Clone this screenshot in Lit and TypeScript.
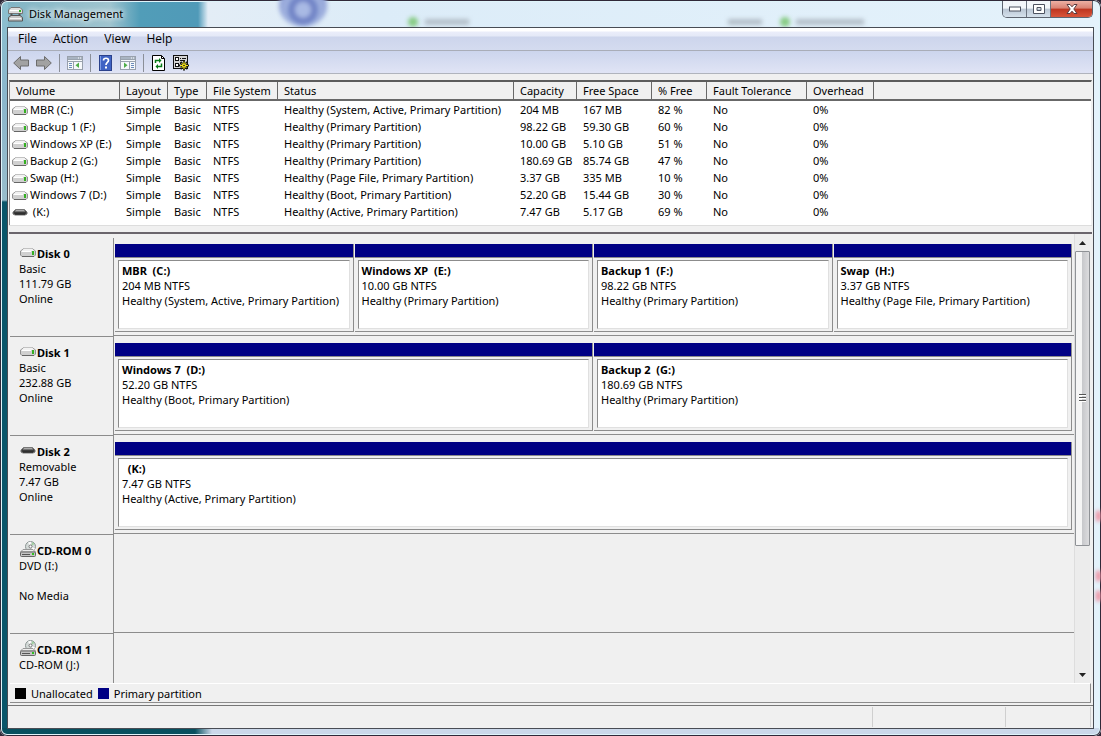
import { LitElement, html, css, svg, nothing } from "lit";
import { customElement, property } from "lit/decorators.js";

type DriveKind = "disk" | "removable" | "cd";

interface Volume {
  name: string;
  kind: DriveKind;
  status: string;
  capacity: string;
  free: string;
  percent: string;
}

interface Partition {
  name: string;
  size: string;
  status: string;
}

interface Disk {
  name: string;
  kind: DriveKind;
  lines: string[];
  partitions: Partition[];
}

const volumes: Volume[] = [
  { name: "MBR (C:)", kind: "disk", status: "Healthy (System, Active, Primary Partition)", capacity: "204 MB", free: "167 MB", percent: "82 %" },
  { name: "Backup 1 (F:)", kind: "disk", status: "Healthy (Primary Partition)", capacity: "98.22 GB", free: "59.30 GB", percent: "60 %" },
  { name: "Windows XP (E:)", kind: "disk", status: "Healthy (Primary Partition)", capacity: "10.00 GB", free: "5.10 GB", percent: "51 %" },
  { name: "Backup 2 (G:)", kind: "disk", status: "Healthy (Primary Partition)", capacity: "180.69 GB", free: "85.74 GB", percent: "47 %" },
  { name: "Swap (H:)", kind: "disk", status: "Healthy (Page File, Primary Partition)", capacity: "3.37 GB", free: "335 MB", percent: "10 %" },
  { name: "Windows 7 (D:)", kind: "disk", status: "Healthy (Boot, Primary Partition)", capacity: "52.20 GB", free: "15.44 GB", percent: "30 %" },
  { name: " (K:)", kind: "removable", status: "Healthy (Active, Primary Partition)", capacity: "7.47 GB", free: "5.17 GB", percent: "69 %" },
];

const disks: Disk[] = [
  {
    name: "Disk 0", kind: "disk", lines: ["Basic", "111.79 GB", "Online"],
    partitions: [
      { name: "MBR  (C:)", size: "204 MB NTFS", status: "Healthy (System, Active, Primary Partition)" },
      { name: "Windows XP  (E:)", size: "10.00 GB NTFS", status: "Healthy (Primary Partition)" },
      { name: "Backup 1  (F:)", size: "98.22 GB NTFS", status: "Healthy (Primary Partition)" },
      { name: "Swap  (H:)", size: "3.37 GB NTFS", status: "Healthy (Page File, Primary Partition)" },
    ],
  },
  {
    name: "Disk 1", kind: "disk", lines: ["Basic", "232.88 GB", "Online"],
    partitions: [
      { name: "Windows 7  (D:)", size: "52.20 GB NTFS", status: "Healthy (Boot, Primary Partition)" },
      { name: "Backup 2  (G:)", size: "180.69 GB NTFS", status: "Healthy (Primary Partition)" },
    ],
  },
  {
    name: "Disk 2", kind: "removable", lines: ["Removable", "7.47 GB", "Online"],
    partitions: [{ name: "  (K:)", size: "7.47 GB NTFS", status: "Healthy (Active, Primary Partition)" }],
  },
  { name: "CD-ROM 0", kind: "cd", lines: ["DVD (I:)", "", "No Media"], partitions: [] },
  { name: "CD-ROM 1", kind: "cd", lines: ["CD-ROM (J:)"], partitions: [] },
];

const columns: [string, string][] = [
  ["Volume", "volume"], ["Layout", "layout"], ["Type", "type"], ["File System", "fs"],
  ["Status", "status"], ["Capacity", "capacity"], ["Free Space", "free"], ["% Free", "percent"],
  ["Fault Tolerance", "fault"], ["Overhead", "overhead"],
];

@customElement("drive-icon")
class DriveIcon extends LitElement {
  @property() kind: DriveKind = "disk";

  static styles = css`
    :host { display: block; flex: none; width: 16px; }
    svg { display: block; }
  `;

  render() {
    if (this.kind === "cd") {
      return html`<svg width="16" height="16" viewBox="0 0 16 16" aria-hidden="true">
        <circle cx="10.5" cy="5.5" r="5" fill="#d4dad8" stroke="#8c9694" />
        <path d="M10.5 5.5 8 1.5 11 .8zM10.5 5.5 15 7.5 13.5 9.5z" fill="#fff" />
        <path d="M11 5 12.500 1 14.500 3z" fill="#9fd09f" />
        <circle cx="10.500" cy="5.500" r="1.500" fill="#fff" stroke="#777" />
        <path d="M3 8.500H13L15.500 11H.5z" fill="#eee" stroke="#999" />
        <rect x=".5" y="11" width="15" height="4.500" rx="1" fill="#c4c4c4" stroke="#666" />
        <path d="M2 13.500H10" stroke="#555" />
        <rect x="12" y="12" width="2" height="2" fill="#2fc020" />
      </svg>`;
    }
    if (this.kind === "removable") {
      return html`<svg width="16" height="10" viewBox="0 0 16 10" aria-hidden="true">
        <path d="M3.500 2.500H12.500L15 5V7L13 8H3L1 7V5z" fill="#3c3c3c" stroke="#777" />
        <path d="M4 3H12L13.500 4.500H2.500z" fill="#aaa" />
        <path d="M3 7H13" stroke="#222" />
      </svg>`;
    }
    return html`<svg width="16" height="10" viewBox="0 0 16 10" aria-hidden="true">
      <path d="M4 1.500H12L15.500 4V8L14 9.500H2L.5 8V4z" fill="#d0d0d0" stroke="#929292" />
      <path d="M4 1.500H12L14.500 4H1.500z" fill="#f2f2f2" />
      <path d="M1.500 4.500H11" stroke="#fff" />
      <rect x="12" y="4" width="2" height="4" fill="#35b022" />
      <path d="M2 9.500H14" stroke="#666" />
    </svg>`;
  }
}

@customElement("volume-list")
class VolumeList extends LitElement {
  static styles = css`
    :host { display: block; background: #fff; border: 1px solid #8a8a8a; border-top: 2px solid #5c5c5c; border-right-color: #f0f0f0; border-bottom: 0; padding-bottom: 5px; }
    table { width: 100%; table-layout: fixed; border-collapse: separate; border-spacing: 0; }
    th { height: 19px; padding: 1px 0 0 6px; font-weight: 400; text-align: left; background: #f0f0f0; line-height: 16px; border-right: 1px solid #686868; border-bottom: 2px solid #686868; box-sizing: border-box; }
    th.rest { border-right: 0; }
    td { height: 17px; padding: 0 0 0 6px; line-height: 17px; white-space: pre; }
    td:first-child { padding-left: 2px; }
    .name { display: flex; align-items: center; gap: 2px; }
    .volume { width: 110px; }
    .layout { width: 48px; }
    .type { width: 39px; }
    .fs { width: 71px; }
    .status { width: 236px; }
    .capacity { width: 63px; }
    .free { width: 75px; }
    .percent { width: 55px; }
    .fault { width: 100px; }
    .overhead { width: 67px; }
  `;

  render() {
    return html`<table>
      <thead><tr>
        ${columns.map(([label, cls]) => html`<th scope="col" class=${cls}>${label}</th>`)}
        <th class="rest"></th>
      </tr></thead>
      <tbody>
        ${volumes.map((v) => html`<tr>
          <td><div class="name"><drive-icon kind=${v.kind}></drive-icon><span>${v.name}</span></div></td>
          <td>Simple</td><td>Basic</td><td>NTFS</td>
          <td>${v.status}</td><td>${v.capacity}</td><td>${v.free}</td><td>${v.percent}</td>
          <td>No</td><td>0%</td>
        </tr>`)}
      </tbody>
    </table>`;
  }
}

@customElement("disk-row")
class DiskRow extends LitElement {
  @property({ attribute: false }) disk!: Disk;

  static styles = css`
    :host { display: grid; grid-template-columns: 104px 1fr; height: 99px; flex: none; line-height: 15px; }
    .label { border-right: 1px solid #8c8c8c; border-bottom: 1px solid #8c8c8c; padding: 8px 0 0 9px; }
    .title { display: flex; align-items: center; height: 15px; font-weight: 700; }
    .title drive-icon { margin: -4px 1px 0 1px; }
    .line { height: 15px; }
    .parts { display: flex; gap: 1px; margin-bottom: 1px; border-bottom: 1px solid #8c8c8c; padding: 6px 2px 3px 1px; }
    .part { flex: 1; min-width: 0; display: flex; flex-direction: column; border-right: 1px solid #8c8c8c; border-bottom: 1px solid #8c8c8c; }
    .bar { height: 13px; background: #000084; border-bottom: 1px solid #8c8c8c; }
    .body { flex: 1; margin: 2px 3px; padding: 2px 3px 3px; background: #fff; border: 1px solid #8c8c8c; border-right-color: #e0e0e0; border-bottom-color: #e0e0e0; white-space: pre; overflow: hidden; }
    .name { font-weight: 700; }
  `;

  render() {
    const d = this.disk;
    return html`
      <div class="label">
        <div class="title"><drive-icon kind=${d.kind}></drive-icon><span>${d.name}</span></div>
        ${d.lines.map((l) => html`<div class="line">${l}</div>`)}
      </div>
      <div class="parts">
        ${d.partitions.map((p) => html`<div class="part">
          <div class="bar"></div>
          <div class="body"><div class="name">${p.name}</div><div>${p.size}</div><div>${p.status}</div></div>
        </div>`)}
      </div>`;
  }
}

const arrow = (flip: boolean) => html`<svg width="16" height="16" viewBox="0 0 16 16" aria-hidden="true">
  <path transform=${flip ? "matrix(-1 0 0 1 16 0)" : nothing} d="M.7 8 7.500 1.500V5H15.500V11H7.500V14.500z" fill="#a2a2a2" stroke="#6c6c6c" />
</svg>`;

const paneIcon = (right: boolean) => html`<svg width="16" height="14" viewBox="0 0 16 14" aria-hidden="true">
  <rect x=".5" y=".5" width="15" height="13" fill="#f6f8fb" stroke="#98a0ac" />
  <rect x="1" y="1" width="14" height="2" fill="#a9b4c2" />
  <path d="M11 2H12M13 2H14" stroke="#fff" />
  <path d="M1 3.500H15M1 5.500H15" stroke="#9aa3ae" />
  ${right
    ? svg`<path d="M9.500 5V13" stroke="#98a0ac"/><path d="M11 7.500H14M11 9.500H14M11 11.500H14" stroke="#6b8cba"/><path d="M4 6.500V12L7.500 9.200z" fill="#4fae48"/>`
    : svg`<path d="M6.500 5V13" stroke="#98a0ac"/><path d="M2 7.500H5M2 9.500H5M2 11.500H5" stroke="#6b8cba"/><path d="M12 6.500V12L8.500 9.200z" fill="#4fae48"/>`}
</svg>`;

@customElement("app-root")
class AppRoot extends LitElement {
  static styles = css`
    :host { display: block; font: 11px "Noto Sans", "Open Sans", sans-serif; color: #000; }
    * { box-sizing: border-box; }
    button { font: inherit; color: inherit; background: none; border: 0; padding: 0; display: block; }
    svg { display: block; }

    .frame {
      height: 100vh; display: flex; flex-direction: column; padding: 0 7px 7px; overflow: hidden; position: relative;
      border-radius: 7px; box-shadow: inset 0 0 0 1px #302838, inset 0 0 0 2px #dff4fa, 0 0 0 8px #302838;
      background:
        linear-gradient(90deg, #07505f 0 195px, #cbd8ea 212px) 0 100% / 100% 8px no-repeat,
        linear-gradient(180deg, #8cc0d0 0, #8bb6cc 95px, #98bccb 200px, #09566a 202px) 0 0 / 8px 100% no-repeat,
        linear-gradient(90deg, #7fb3c4 0, #9fc4cf 110px, #519db8 140px, #509ab8 198px, #e3edf6 208px, #dcecf8 380px, #e4f2fb 100%);
    }
    .glow { position: absolute; filter: blur(2px); }
    .ring { left: 279px; top: -16px; width: 48px; height: 43px; border-radius: 50%; background: radial-gradient(circle at 50% 60%, #a9bae4 0 7px, #6d7ec2 10px, #6e83c6 13px, #a3b5e0 17px, #93a4d8 22px); }
    .dot { top: 17px; width: 10px; height: 10px; border-radius: 5px; background: #87cb83; }
    .smudge { top: 19px; height: 6px; background: #b5c0ca; }
    .s1 { left: 408px; } .s2 { left: 425px; width: 44px; } .s3 { left: 728px; width: 34px; } .s4 { left: 780px; } .s5 { left: 796px; width: 68px; }
    .red { right: 0; width: 5px; height: 10px; background: #f0899a; }
    .r1 { top: 511px; } .r2 { top: 571px; } .r3 { top: 591px; }

    .titlebar { position: relative; flex: none; height: 27px; display: flex; justify-content: space-between; align-items: flex-start; padding: 0 1px; }
    .title { display: flex; align-items: center; gap: 6px; height: 27px; font-size: 11px; font-weight: 400; margin: 0; text-shadow: 0 0 6px #fff, 0 0 6px #fff; }
    .controls { display: flex; margin-top: 1px; border: 1px solid #5d6470; border-top: 0; border-radius: 0 0 5px 5px; overflow: hidden; }
    .ctl { height: 16px; width: 24px; display: flex; align-items: center; justify-content: center; background: linear-gradient(#f2f6fa 0 45%, #bac6d4 50%, #d5e1ec); border-right: 1px solid #6b7380; }
    .close { width: 41px; border-right: 0; background: linear-gradient(#edb0a4 0, #d98273 45%, #bd3520 50%, #d9553a); }

    .client { position: relative; flex: 1; min-height: 0; display: flex; flex-direction: column; border: 1px solid #484c54; background: #f0f0f0; }
    .menu { flex: none; height: 23px; display: flex; padding: 0 10px 2px; gap: 16px; align-items: center; border-bottom: 1px solid #a9adb8; background: linear-gradient(#fff 0 3px, #eaedfa 4px, #e4e9f7 8px, #cdd5ec 9px, #d4dbef); font: 12px "Open Sans", "Noto Sans", sans-serif; }
    .tools { flex: none; height: 23px; display: flex; align-items: center; padding: 2px 0 0 5px; border-bottom: 1px solid #b0b4bd; gap: 7px; background: linear-gradient(#ccd5ed, #e0e4f5); }
    .sep { width: 1px; height: 18px; background: #8b8f98; }
    .wide { margin-left: 1px; }

    .volumes { flex: none; margin: 6px 1px 0; }
    .splitter { flex: none; height: 9px; margin: 0 1px; border-top: 1px solid #ddd; border-bottom: 2px solid #6a656c; background: #f0f0f0; }
    .graph { flex: 1; min-height: 0; display: grid; grid-template-columns: 1fr 16px; padding: 0 3px 0 2px; }
    .rows { display: flex; flex-direction: column; overflow: hidden; min-height: 0; padding-top: 4px; }
    .scroll { display: flex; flex-direction: column; background: #ececec; border-left: 1px solid #ddd; }
    .step { width: 15px; height: 17px; display: flex; align-items: center; justify-content: center; flex: none; }
    .track { flex: 1; min-height: 0; }
    .thumb { height: 71%; border: 1px solid #8f9296; border-radius: 1px; background: linear-gradient(90deg, #f5f5f5 0 45%, #c8c9cc 50%, #dcdcde); display: flex; align-items: center; justify-content: center; }
    .legend { flex: none; height: 20px; margin: 0 2px; padding-left: 5px; display: flex; align-items: center; gap: 5px; border-top: 1px solid #fff; border-right: 1px solid #8c8c8c; border-bottom: 1px solid #8c8c8c; }
    .swatch { width: 11px; height: 11px; background: #000; }
    .swatch.primary { background: #000084; }
    .status { flex: none; height: 23px; margin-top: 2px; border-top: 1px solid #777; padding: 1px 2px 1px 0; display: grid; grid-template-columns: 1fr 133px 85px; }
    .cell { border-right: 1px solid #cfcfcf; }
  `;

  render() {
    return html`<div class="frame">
      <div class="glow ring"></div>
      <div class="glow dot s1"></div><div class="glow smudge s2"></div><div class="glow smudge s3"></div>
      <div class="glow dot s4"></div><div class="glow smudge s5"></div>
      <div class="glow red r1"></div><div class="glow red r2"></div><div class="glow red r3"></div>

      <header class="titlebar">
        <h1 class="title">
          <svg width="15" height="16" viewBox="0 0 15 16" aria-hidden="true">
            <path d="M3 1.500H12L14.500 4V7.500H.5V4z" fill="#ddd" stroke="#777" />
            <path d="M2 4.500H11" stroke="#fff" /><rect x="11" y="4" width="2" height="2" fill="#2fb520" />
            <path d="M3.500 7.500V10M11.500 7.500V10" stroke="#555" stroke-width="2" />
            <path d="M3 9.500H12L14.500 11.500V15H.5V11.500z" fill="#c9c9c9" stroke="#555" />
            <path d="M2 12.500H13" stroke="#f5f5f5" />
          </svg>
          Disk Management
        </h1>
        <div class="controls">
          <button class="ctl" aria-label="Minimize"><svg width="12" height="6" viewBox="0 0 12 6"><rect x=".5" y="1" width="11" height="4" fill="#fff" stroke="#4d5361" /></svg></button>
          <button class="ctl" aria-label="Maximize"><svg width="12" height="10" viewBox="0 0 12 10"><path fill-rule="evenodd" d="M.5.5H11.500V9.500H.5zM4 3.500V6.500H8V3.500z" fill="#fff" stroke="#4d5361" /></svg></button>
          <button class="ctl close" aria-label="Close"><svg width="12" height="10" viewBox="0 0 12 10"><path d="M1 .5H4L6 2.800 8 .5H11L7.800 5 11 9.500H8L6 7.200 4 9.500H1L4.200 5z" fill="#fff" stroke="#5a3c40" /></svg></button>
        </div>
      </header>

      <main class="client">
        <nav class="menu">
          <button>File</button><button>Action</button><button>View</button><button>Help</button>
        </nav>
        <div class="tools">
          <button aria-label="Back">${arrow(false)}</button>
          <button aria-label="Forward">${arrow(true)}</button>
          <span class="sep"></span>
          <button aria-label="Show console tree">${paneIcon(false)}</button>
          <span class="sep"></span>
          <button class="wide" aria-label="Help"><svg width="13" height="16" viewBox="0 0 13 16">
            <rect x=".5" y=".5" width="12" height="15" fill="#3f63c4" stroke="#2b418c" />
            <path d="M1.500 1V15" stroke="#7f9ce4" />
            <path d="M4.500 5.500C4.500 2.500 9.500 2.500 9.500 5.500 9.500 7.500 7 7.500 7 10" fill="none" stroke="#fff" stroke-width="1.700" />
            <rect x="6" y="11.500" width="2" height="2" fill="#fff" />
          </svg></button>
          <button class="wide" aria-label="Show action pane">${paneIcon(true)}</button>
          <span class="sep"></span>
          <button class="wide" aria-label="Refresh"><svg width="13" height="16" viewBox="0 0 13 16">
            <path d="M.5.5H9.500L12.500 3.500V15.500H.5z" fill="#fff" stroke="#000" /><path d="M9.500.5V3.500H12.500" fill="none" stroke="#000" />
            <path d="M3.500 8V5.500H8" fill="none" stroke="#087b18" stroke-width="1.500" /><path d="M7 3V8L9.500 5.500z" fill="#087b18" />
            <path d="M9.500 8.500V11.500H5" fill="none" stroke="#087b18" stroke-width="1.500" /><path d="M6 9V14L3.500 11.500z" fill="#087b18" />
          </svg></button>
          <button class="wide" aria-label="Properties"><svg width="16" height="16" viewBox="0 0 16 16">
            <rect x=".5" y=".5" width="14" height="13" fill="#d6d6d6" stroke="#111" />
            <rect x="2.500" y="2.500" width="3" height="3" fill="#fff" stroke="#111" /><rect x="2.500" y="8.500" width="3" height="3" fill="#fff" stroke="#111" />
            <path d="M7 3.500H8M9 3.500H13M7 5.500H12M7 8.500H9" stroke="#111" />
            <path d="M11 5.500V15.500M6 10.500H16M7.500 7 14.500 14M14.500 7 7.500 14" stroke="#111" stroke-width="2" />
            <path d="M11 6.500V14.500M7 10.500H15M8.500 8 13.500 13M13.500 8 8.500 13" stroke="#f4e31c" stroke-width="1" />
            <circle cx="11" cy="10.500" r="2" fill="#f4e31c" /><circle cx="11" cy="10.500" r=".8" fill="#111" />
          </svg></button>
        </div>

        <volume-list class="volumes"></volume-list>
        <div class="splitter"></div>

        <section class="graph">
          <div class="rows">${disks.map((d) => html`<disk-row .disk=${d}></disk-row>`)}</div>
          <div class="scroll">
            <button class="step" aria-label="Scroll up"><svg width="7" height="4" viewBox="0 0 7 4"><path d="M0 4 3.500 0 7 4z" fill="#222" /></svg></button>
            <div class="track"><div class="thumb">
              <svg width="7" height="8" viewBox="0 0 7 8"><path d="M0 .5H7M0 3.500H7M0 6.500H7" stroke="#555" /><path d="M0 1.500H7M0 4.500H7M0 7.500H7" stroke="#fff" /></svg>
            </div></div>
            <button class="step" aria-label="Scroll down"><svg width="7" height="4" viewBox="0 0 7 4"><path d="M0 0H7L3.500 4z" fill="#222" /></svg></button>
          </div>
        </section>

        <div class="legend">
          <span class="swatch"></span><span>Unallocated</span>
          <span class="swatch primary"></span><span>Primary partition</span>
        </div>
        <footer class="status"><div class="cell"></div><div class="cell"></div><div class="cell"></div></footer>
      </main>
    </div>`;
  }
}
